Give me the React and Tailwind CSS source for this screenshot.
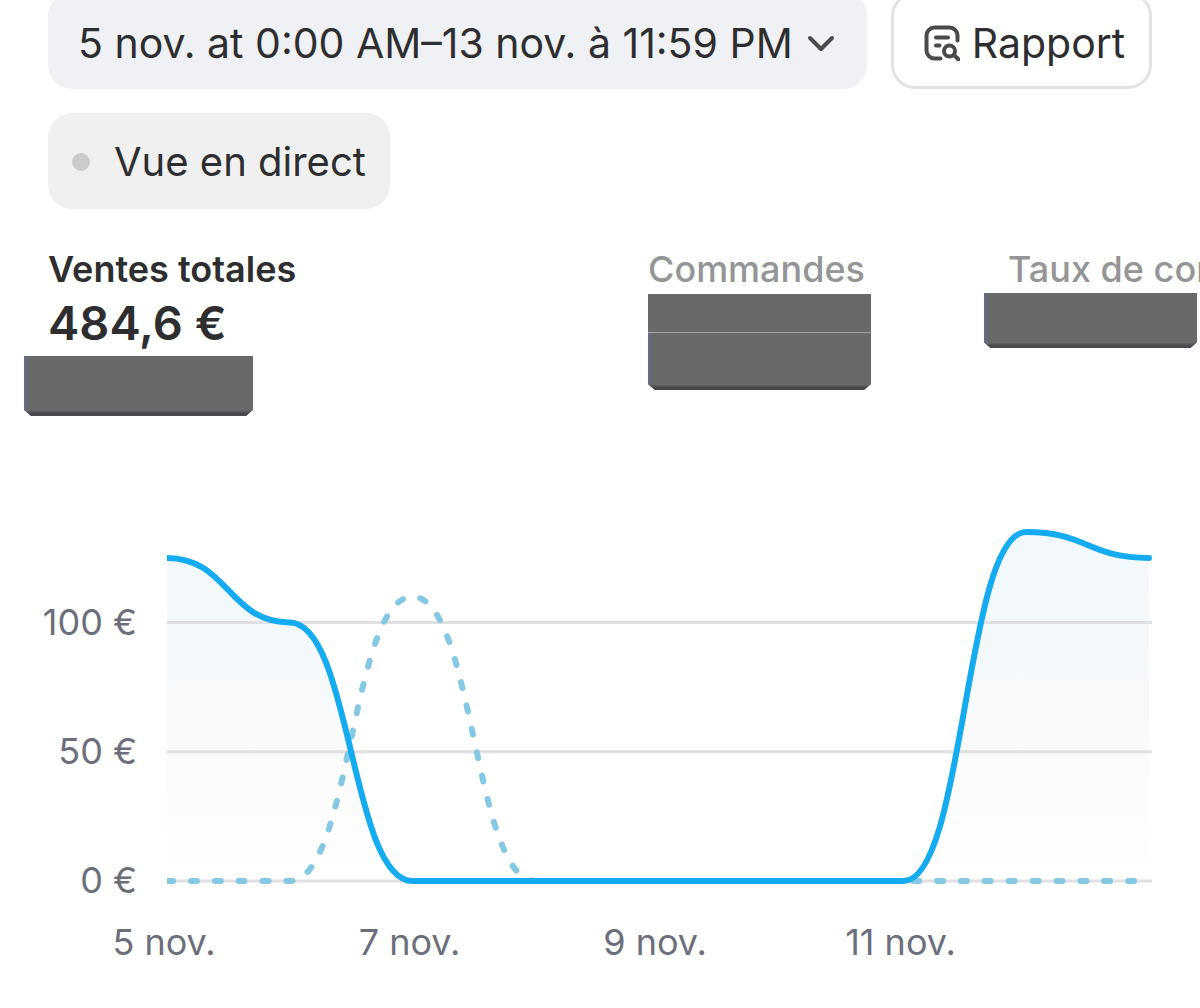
const DAY = 122.75;
const LEFT = 167;
const BASE = 411;

const sales = [125, 100, 0, 0, 0, 0, 0, 135, 125];
const previous = [0, 0, 110, 0, 0, 0, 0, 0, 0];
const ticks = [100, 50, 0];
const days = [
  { label: '5 nov.', index: 0 },
  { label: '7 nov.', index: 2 },
  { label: '9 nov.', index: 4 },
  { label: '11 nov.', index: 6 },
];

const px = (i) => LEFT + i * DAY;
const py = (value) => BASE - value * 2.585;

function curve(values) {
  return values
    .map((value, i) => {
      if (i === 0) return `M${px(0)} ${py(value)}`;
      const mid = px(i) - DAY / 2;
      return `C${mid} ${py(values[i - 1])} ${mid} ${py(value)} ${px(i)} ${py(value)}`;
    })
    .join(' ');
}

function ReportIcon() {
  return (
    <svg viewBox="0 0 36 36" className="size-9 shrink-0" fill="none" stroke="#4a4a4a" strokeWidth="4" strokeLinecap="round" aria-hidden="true">
      <path d="M33.500 15.500V10.500a8 8 0 0 0-8-8h-15a8 8 0 0 0-8 8v15a8 8 0 0 0 8 8h6" />
      <path d="M12 12.500h12M12 20.500h3.500" />
      <circle cx="25.500" cy="26" r="5.500" />
      <path d="M30 30l4.500 4.500" />
    </svg>
  );
}

function Redaction({ className }) {
  return (
    <div
      aria-hidden="true"
      className={`bg-linear-to-b from-[#68696b] from-90% to-[#47484b] to-96% [clip-path:polygon(0_0,100%_0,100%_90%,97%_100%,3%_100%,0_90%)] ${className}`}
    >
      <div className="h-full w-1 bg-linear-to-r from-[#5c6fae]/50 to-transparent" />
    </div>
  );
}

function SalesChart() {
  const line = curve(sales);
  return (
    <svg viewBox="0 0 1200 538" className="block w-full" role="img" aria-label="Ventes totales">
      <defs>
        <linearGradient id="area" x1="0" y1="0" x2="0" y2="1">
          <stop offset="0" stopColor="#f2f9fd" />
          <stop offset="0.3" stopColor="#f4f8fb" />
          <stop offset="0.6" stopColor="#fafafb" />
          <stop offset="1" stopColor="#ffffff" />
        </linearGradient>
        <clipPath id="plot">
          <rect x={LEFT} y="0" width="990" height="430" />
        </clipPath>
      </defs>
      <g clipPath="url(#plot)" fill="none">
        <path d={`${line} V${BASE} H${LEFT} Z`} fill="url(#area)" />
        {ticks.map((t) => (
          <path key={t} d={`M${LEFT} ${py(t)}H1152`} stroke="#e0e0e2" strokeWidth="3" />
        ))}
        <path d={curve(previous)} stroke="#84c8e4" strokeWidth="6" strokeLinecap="round" strokeDasharray="6 17.9" />
        <path d={line} stroke="#14abf0" strokeWidth="6" strokeLinecap="round" strokeLinejoin="round" />
      </g>
      <g fill="#6d6e7b" fontSize="36">
        {ticks.map((t) => (
          <text key={t} x="137" y={py(t) + 12} textAnchor="end">{t} €</text>
        ))}
        {days.map((d) => (
          <text key={d.label} x={px(d.index) - 3} y="485" textAnchor="middle">{d.label}</text>
        ))}
      </g>
    </svg>
  );
}

export default function App() {
  return (
    <main className="overflow-hidden bg-white font-['Inter',sans-serif] text-[#2e2e30]">
      <div className="-mt-2 flex flex-wrap gap-6 pl-12 pr-10 text-[41px] leading-[48px]">
        <button type="button" className="flex h-[97px] items-center gap-3 whitespace-nowrap rounded-3xl bg-[#f0f1f4] px-[30px] pt-1">
          5 nov. at 0:00 AM–13 nov. à 11:59 PM
          <svg viewBox="0 0 32 32" className="size-8" fill="none" stroke="#4a4a4a" strokeWidth="4" strokeLinecap="round" strokeLinejoin="round" aria-hidden="true">
            <path d="M5 11l11 11 11-11" />
          </svg>
        </button>
        <button type="button" className="flex h-[97px] items-center gap-3 whitespace-nowrap rounded-3xl border-3 border-[#e3e3e3] pl-[30px] pr-6 pt-1">
          <ReportIcon />
          Rapport
        </button>
        <button type="button" className="flex h-24 items-center gap-6 whitespace-nowrap rounded-3xl bg-[#f0f0f0] px-6 pt-0.5 text-[40px]">
          <span className="size-[18px] rounded-full bg-[#cbcbcb]" />
          Vue en direct
        </button>
      </div>

      <section className="mt-[38px] flex h-[223px] items-start whitespace-nowrap pl-12 text-[36px] font-medium leading-[44px] text-[#959597]">
        <button type="button" className="w-[600px] shrink-0 text-left text-[#2e2e30]">
          <div className="font-semibold">Ventes totales</div>
          <div className="text-[47px] font-semibold leading-[64px]">484,6 €</div>
          <Redaction className="-ml-6 mt-px h-[60px] w-[229px]" />
        </button>
        <button type="button" className="w-[360px] shrink-0 text-left">
          <div>Commandes</div>
          <div className="mt-[3px] h-[38px] w-[223px] bg-[#68696b]" />
          <div className="w-[223px] border-t border-[#a4a4a6]">
            <Redaction className="h-[57px]" />
          </div>
        </button>
        <button type="button" className="shrink-0 text-left">
          <div>Taux de conversion</div>
          <Redaction className="-ml-6 mt-0.5 h-[55px] w-[213px]" />
        </button>
      </section>

      <SalesChart />
    </main>
  );
}
